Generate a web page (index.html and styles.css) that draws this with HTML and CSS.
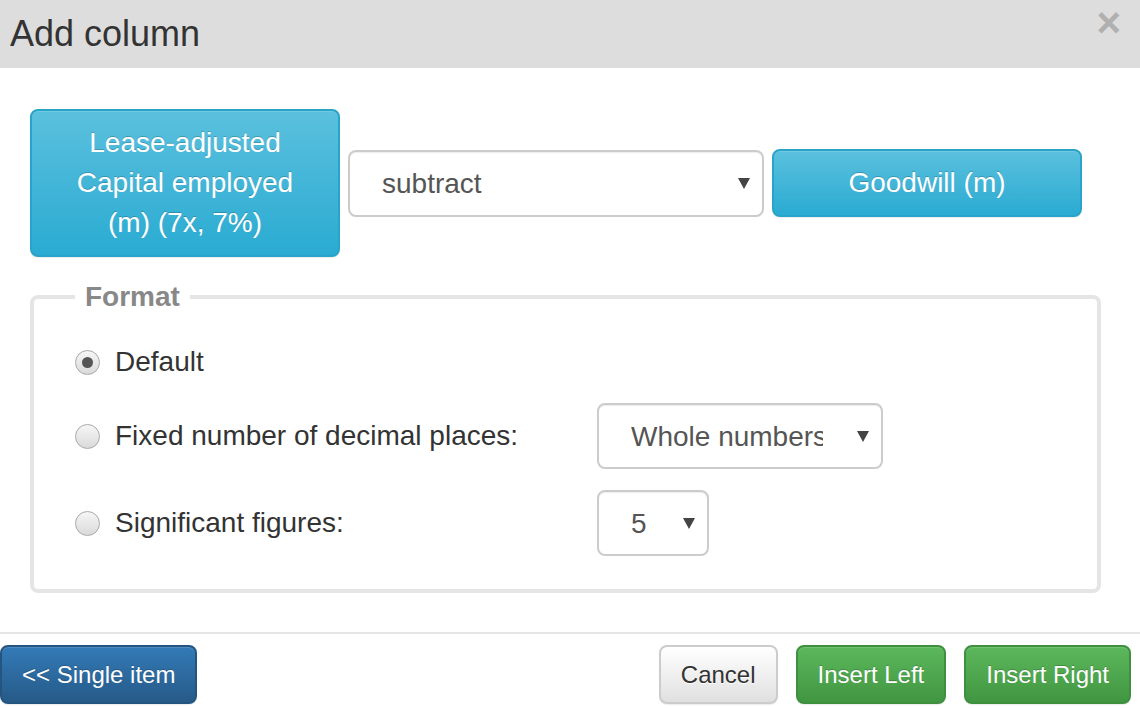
FILE: index.html
```html
<!DOCTYPE html>
<html lang="en">
<head>
    <meta charset="UTF-8">
    <meta name="viewport" content="width=device-width, initial-scale=1.0">
    <title>Add column</title>
    <link rel="stylesheet" href="styles.css">
</head>
<body>

    <div class="modal">
        <div class="modal-header">
            <h4 class="modal-title">Add column</h4>
            <span class="close">&times;</span>
        </div>

        <div class="modal-body">
            <div class="formula">
                <button class="btn btn-info operand">Lease-adjusted Capital employed (m) (7x, 7%)</button>
                <div class="select-wrap operator">
                    <select class="form-control">
                        <option>subtract</option>
                        <option>add</option>
                        <option>multiply</option>
                        <option>divide</option>
                    </select>
                </div>
                <button class="btn btn-info operand">Goodwill (m)</button>
            </div>

            <fieldset class="format">
                <legend>Format</legend>
                <div class="format-grid">
                    <label class="radio"><input type="radio" name="format" value="default" checked> Default</label>

                    <label class="radio"><input type="radio" name="format" value="fixed"> Fixed number of decimal places:</label>
                    <div class="select-wrap decimals">
                        <select class="form-control">
                            <option>Whole numbers</option>
                            <option>1</option>
                            <option>2</option>
                            <option>3</option>
                        </select>
                    </div>

                    <label class="radio"><input type="radio" name="format" value="sig"> Significant figures:</label>
                    <div class="select-wrap sigfigs">
                        <select class="form-control">
                            <option>5</option>
                            <option>4</option>
                            <option>3</option>
                            <option>2</option>
                        </select>
                    </div>
                </div>
            </fieldset>
        </div>

        <div class="modal-footer">
            <button class="btn btn-primary">&lt;&lt; Single item</button>
            <button class="btn btn-default push">Cancel</button>
            <button class="btn btn-success">Insert Left</button>
            <button class="btn btn-success">Insert Right</button>
        </div>
    </div>

</body>
</html>
```

FILE: styles.css
```css
body {
    margin: 0;
    padding: 0;
    font-family: "Liberation Sans", Arial, sans-serif;
    color: #333;
    background-color: #fff;
}
.modal {
    width: 1140px;
    height: 708px;
    overflow: hidden;
}
.modal-header {
    height: 68px;
    background-color: #ddd;
    padding: 0 10px;
    display: flex;
    align-items: center;
}
.modal-title {
    margin: 0;
    font-size: 36px;
    font-weight: normal;
    color: #333;
}
.close {
    margin-left: auto;
    align-self: flex-start;
    margin-top: 2px;
    margin-right: 9px;
    font-size: 42px;
    font-weight: bold;
    line-height: 1;
    color: #b0b0b0;
    cursor: pointer;
}
.modal-body {
    padding: 41px 30px 0;
}
.formula {
    display: flex;
    align-items: center;
    gap: 8px;
}
.btn {
    font-family: inherit;
    font-size: 28px;
    line-height: 40px;
    padding: 12px 24px;
    border: 2px solid transparent;
    border-radius: 8px;
    cursor: pointer;
    text-align: center;
}
.btn-info {
    color: #fff;
    background-image: linear-gradient(to bottom, #5bc0de 0, #2aabd2 100%);
    border-color: #28a4c9;
    text-shadow: 0 -1px 0 rgba(0, 0, 0, 0.2);
    box-shadow: inset 0 1px 0 rgba(255, 255, 255, 0.15), 0 1px 1px rgba(0, 0, 0, 0.075);
}
.btn-primary {
    color: #fff;
    background-image: linear-gradient(to bottom, #337ab7 0, #265a88 100%);
    border-color: #245580;
    text-shadow: 0 -1px 0 rgba(0, 0, 0, 0.2);
    box-shadow: inset 0 1px 0 rgba(255, 255, 255, 0.15), 0 1px 1px rgba(0, 0, 0, 0.075);
}
.btn-success {
    color: #fff;
    background-image: linear-gradient(to bottom, #5cb85c 0, #419641 100%);
    border-color: #3e8f3e;
    text-shadow: 0 -1px 0 rgba(0, 0, 0, 0.2);
    box-shadow: inset 0 1px 0 rgba(255, 255, 255, 0.15), 0 1px 1px rgba(0, 0, 0, 0.075);
}
.btn-default {
    color: #333;
    background-image: linear-gradient(to bottom, #fff 0, #e0e0e0 100%);
    border-color: #ccc;
    text-shadow: 0 1px 0 #fff;
    box-shadow: inset 0 1px 0 rgba(255, 255, 255, 0.15), 0 1px 1px rgba(0, 0, 0, 0.075);
}
.operand {
    width: 310px;
}
.select-wrap {
    position: relative;
}
/* the little solid arrow on the right of each select */
.select-wrap::after {
    content: "";
    position: absolute;
    right: 14px;
    top: 50%;
    margin-top: -5px;
    border-left: 6px solid transparent;
    border-right: 6px solid transparent;
    border-top: 11px solid #444;
    pointer-events: none;
}
.form-control {
    appearance: none;
    -webkit-appearance: none;
    width: 100%;
    height: 67px;
    font-family: inherit;
    font-size: 28px;
    color: #555;
    background-color: #fff;
    border: 2px solid #ccc;
    border-radius: 8px;
    padding: 0 40px 0 32px;
    box-shadow: inset 0 1px 1px rgba(0, 0, 0, 0.075);
}
.operator {
    width: 416px;
}
.decimals {
    width: 286px;
}
.decimals .form-control,
.sigfigs .form-control {
    height: 66px;
}
.decimals .form-control {
    padding-right: 58px;
}
.sigfigs {
    width: 112px;
}
.format {
    width: 1071px;
    box-sizing: border-box;
    margin: 20px 0 0;
    padding: 0 41px 33px;
    border: 4px solid #e5e5e5;
    border-radius: 8px;
}
.format legend {
    padding: 0 10px;
    font-size: 28px;
    line-height: 40px;
    font-weight: bold;
    color: #888;
}
.format-grid {
    margin-top: 25px;
    display: grid;
    grid-template-columns: 522px auto;
    justify-items: start;
    align-items: center;
    row-gap: 21px;
}
.format-grid > .radio:first-child {
    grid-column: 1 / 3;
}
.radio {
    display: flex;
    align-items: center;
    gap: 15px;
    font-size: 28px;
    line-height: 40px;
    color: #333;
    cursor: pointer;
}
.radio input {
    appearance: none;
    -webkit-appearance: none;
    margin: 0;
    width: 25px;
    height: 25px;
    border: 1px solid #a9a9a9;
    border-radius: 50%;
    background-image: linear-gradient(to bottom, #f6f6f6 0, #dadada 100%);
    display: flex;
    align-items: center;
    justify-content: center;
}
.radio input:checked::after {
    content: "";
    width: 11px;
    height: 11px;
    border-radius: 50%;
    background-color: #555;
}
.modal-footer {
    margin-top: 39px;
    border-top: 2px solid #e5e5e5;
    padding: 11px 9px 0 0;
    display: flex;
    gap: 18px;
}
.modal-footer .btn {
    font-size: 24px;
    line-height: 35px;
    padding: 10px 20px;
}
.push {
    margin-left: auto;
}
```
